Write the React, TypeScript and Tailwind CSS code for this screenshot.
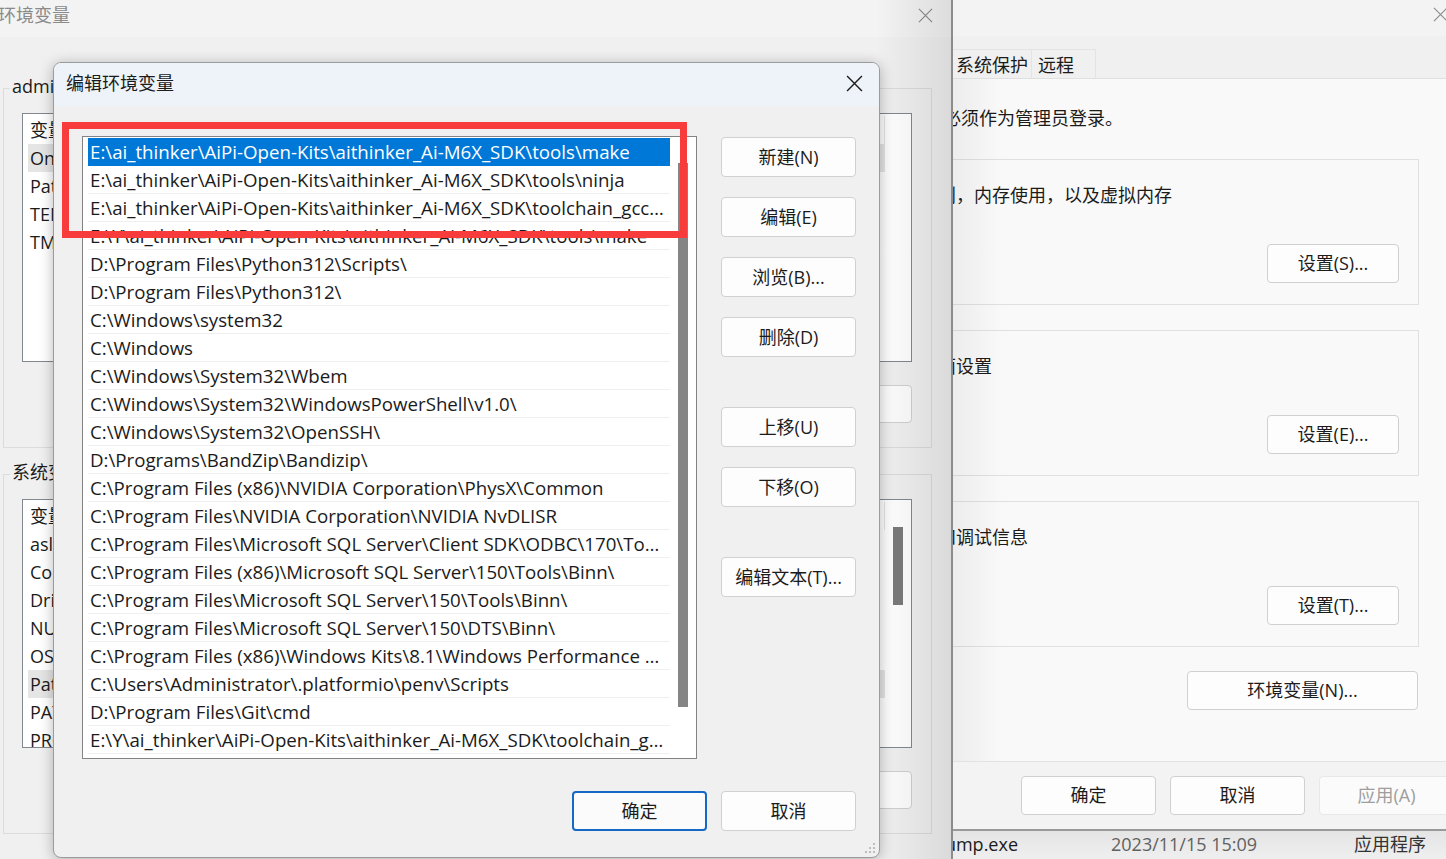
import React from "react";

const PATHS = [
  "E:\\ai_thinker\\AiPi-Open-Kits\\aithinker_Ai-M6X_SDK\\tools\\make",
  "E:\\ai_thinker\\AiPi-Open-Kits\\aithinker_Ai-M6X_SDK\\tools\\ninja",
  "E:\\ai_thinker\\AiPi-Open-Kits\\aithinker_Ai-M6X_SDK\\toolchain_gcc_t-head_windows\\bin",
  "E:\\Y\\ai_thinker\\AiPi-Open-Kits\\aithinker_Ai-M6X_SDK\\tools\\make",
  "D:\\Program Files\\Python312\\Scripts\\",
  "D:\\Program Files\\Python312\\",
  "C:\\Windows\\system32",
  "C:\\Windows",
  "C:\\Windows\\System32\\Wbem",
  "C:\\Windows\\System32\\WindowsPowerShell\\v1.0\\",
  "C:\\Windows\\System32\\OpenSSH\\",
  "D:\\Programs\\BandZip\\Bandizip\\",
  "C:\\Program Files (x86)\\NVIDIA Corporation\\PhysX\\Common",
  "C:\\Program Files\\NVIDIA Corporation\\NVIDIA NvDLISR",
  "C:\\Program Files\\Microsoft SQL Server\\Client SDK\\ODBC\\170\\Tools\\Binn\\",
  "C:\\Program Files (x86)\\Microsoft SQL Server\\150\\Tools\\Binn\\",
  "C:\\Program Files\\Microsoft SQL Server\\150\\Tools\\Binn\\",
  "C:\\Program Files\\Microsoft SQL Server\\150\\DTS\\Binn\\",
  "C:\\Program Files (x86)\\Windows Kits\\8.1\\Windows Performance Toolkit\\",
  "C:\\Users\\Administrator\\.platformio\\penv\\Scripts",
  "D:\\Program Files\\Git\\cmd",
  "E:\\Y\\ai_thinker\\AiPi-Open-Kits\\aithinker_Ai-M6X_SDK\\toolchain_gcc_t-head_windows\\bin",
];

const USER_VARS = ["OneDrive", "Path", "TEMP", "TMP"];
const SYS_VARS = [
  "asl.log",
  "ComSpec",
  "DriverData",
  "NUMBER_OF_PROCESSORS",
  "OS",
  "Path",
  "PATHEXT",
  "PROCESSOR_ARCHITECTURE",
];

function CloseX({ size = 16, color = "#1b1b1b", width = 1.3 }: { size?: number; color?: string; width?: number }) {
  return (
    <svg width={size} height={size} viewBox="0 0 16 16" fill="none">
      <path d="M1 1L15 15M15 1L1 15" stroke={color} strokeWidth={width} />
    </svg>
  );
}

function Btn({
  children,
  className = "",
  primary = false,
  disabled = false,
}: {
  children: React.ReactNode;
  className?: string;
  primary?: boolean;
  disabled?: boolean;
}) {
  const look = primary
    ? "border-2 border-[#1568c4] bg-[#fbfbfb] text-[#1b1b1b]"
    : disabled
    ? "border border-[#e8e8e8] bg-[#fbfbfb] text-[#9e9e9e]"
    : "border border-[#d0d0d0] bg-[#fdfdfd] text-[#1b1b1b]";
  return (
    <div className={`flex shrink-0 items-center justify-center rounded-[4px] text-[18px] ${look} ${className}`}>
      {children}
    </div>
  );
}

function EnvGroup({
  label,
  rows,
  selected,
  scroll,
}: {
  label: string;
  rows: string[];
  selected: number;
  scroll?: boolean;
}) {
  return (
    <div className="h-[360px] w-[929px] border border-[#dcdcdc]">
      <div className="-mt-[15px] ml-[6px] w-fit bg-[#f0f0f0] px-[2px] text-[18px] leading-[24px] text-[#1b1b1b]">
        {label}
      </div>
      <div className="ml-[18px] mr-[19px] mt-[15px] flex h-[249px] border border-[#828790] bg-white">
        <div className="flex-1 pl-[5px] pt-[2px]">
          <div className="flex h-[28px] w-[857px] items-center border-r border-[#e5e5e5] pl-[2px] text-[18px]">
            <span className="w-[300px]">变量</span>
            <span>值</span>
          </div>
          {rows.map((r, i) => (
            <div
              key={r}
              className={`flex h-[28px] w-[857px] items-center pl-[2px] text-[18px] ${i === selected ? "bg-[#e5e5e5]" : ""}`}
            >
              {r}
            </div>
          ))}
        </div>
        {scroll && (
          <div className="w-[18px]">
            <div className="mt-[27px] h-[78px] w-[10px] bg-[#7b7b7b]" />
          </div>
        )}
      </div>
      <div className="mr-[19px] mt-[23px] flex justify-end gap-[14px]">
        <Btn className="h-[38px] w-[135px]">新建(N)...</Btn>
        <Btn className="h-[38px] w-[135px]">编辑(E)...</Btn>
        <Btn className="h-[38px] w-[135px]">删除(D)</Btn>
      </div>
    </div>
  );
}

function SettingsGroup({ text, button, first }: { text: string; button: string; first?: boolean }) {
  return (
    <div className={`flex h-[146px] w-[486px] flex-col border border-[#e0e0e0] ${first ? "mt-[30px]" : "mt-[25px]"} -ml-[20px]`}>
      <div className="ml-[4px] mt-[24px] whitespace-nowrap text-[18px] leading-[22px]">{text}</div>
      <Btn className="mr-[19px] mt-[38px] h-[39px] w-[132px] self-end">{button}</Btn>
    </div>
  );
}

export default function App() {
  return (
    <div className="relative h-[859px] w-[1446px] overflow-hidden bg-[#e9e9e9] font-['Open_Sans','Noto_Sans_CJK_SC',sans-serif] text-[#1b1b1b]">
      {/* explorer row behind the windows */}
      <div className="absolute left-[880px] top-[829px] flex h-[30px] w-[600px] items-center bg-gradient-to-b from-[#e4e4e4] to-[#efefef] text-[18px]">
        <span className="w-[138px] whitespace-nowrap text-right">procdump.exe</span>
        <span className="ml-[93px] w-[243px] text-[#616161]">2023/11/15 15:09</span>
        <span className="text-[#333]">应用程序</span>
      </div>

      {/* system properties window */}
      <div className="absolute left-[953px] top-0 flex h-[831px] w-[520px] flex-col border-b-2 border-[#9a9a9a] bg-[#f0f0f0]">
        <div className="flex h-[36px] shrink-0 items-center justify-end bg-[#f3f3f3] pb-[7px] pr-[25px]">
          <CloseX size={15} color="#8a8a8a" width={1.2} />
        </div>
        <div className="flex h-[43px] shrink-0 items-end border-b border-[#dfdfdf]">
          <div className="-ml-[8px] flex h-[29px] items-center border border-b-0 border-[#e3e3e3] pl-[10px] pr-[3px] pt-[3px] text-[18px]">
            系统保护
          </div>
          <div className="flex h-[29px] w-[64px] items-center border border-b-0 border-l-0 border-[#e3e3e3] pl-[6px] pt-[3px] text-[18px]">
            远程
          </div>
        </div>
        <div className="relative flex flex-1 flex-col overflow-hidden bg-[#f9f9f9] pr-[54px]">
          <div className="-ml-[10px] mt-[28px] whitespace-nowrap text-[18px] leading-[22px]">必须作为管理员登录。</div>
          <SettingsGroup first text="划，内存使用，以及虚拟内存" button="设置(S)..." />
          <SettingsGroup text="面设置" button="设置(E)..." />
          <SettingsGroup text="和调试信息" button="设置(T)..." />
          <Btn className="mr-[1px] mt-[24px] h-[39px] w-[231px] self-end">环境变量(N)...</Btn>
          <div className="pointer-events-none absolute inset-y-0 left-0 w-[50px] bg-gradient-to-r from-[rgba(0,0,0,0.05)] to-transparent" />
        </div>
        <div className="flex h-[68px] shrink-0 gap-[14px] border-t border-[#e2e2e2] bg-[#f3f3f3] pl-[68px] pt-[14px]">
          <Btn className="h-[39px] w-[135px]">确定</Btn>
          <Btn className="h-[39px] w-[135px]">取消</Btn>
          <Btn disabled className="h-[39px] w-[135px]">
            应用(A)
          </Btn>
        </div>
      </div>

      {/* environment variables window */}
      <div className="absolute left-0 top-0 h-[859px] w-[953px] overflow-hidden border-r-2 border-[#8c8c8c] bg-[#f0f0f0]">
        <div className="flex h-[37px] items-center justify-between bg-[#f3f3f3] pb-[7px] pr-[18px]">
          <span className="-ml-[2px] text-[18px] text-[#8a8a8a]">环境变量</span>
          <CloseX size={15} color="#8a8a8a" width={1.2} />
        </div>
        <div className="pl-[3px] pt-[51px]">
          <EnvGroup label="admin 的用户变量(U)" rows={USER_VARS} selected={0} />
          <div className="mt-[26px]">
            <EnvGroup label="系统变量(S)" rows={SYS_VARS} selected={5} scroll />
          </div>
        </div>
        <div className="pointer-events-none absolute inset-y-0 right-0 w-[75px] bg-gradient-to-r from-transparent to-[rgba(0,0,0,0.09)]" />
      </div>

      {/* edit environment variable dialog */}
      <div className="absolute left-[53px] top-[62px] flex h-[796px] w-[827px] flex-col overflow-hidden rounded-[8px] border border-[#9b9b9b] bg-[#f0f0f0] shadow-[0_2px_14px_rgba(0,0,0,0.28)]">
        <div className="flex h-[43px] shrink-0 items-center justify-between bg-[#eef3f9] pb-[2px] pl-[12px] pr-[16px]">
          <span className="text-[18px]">编辑环境变量</span>
          <CloseX size={17} />
        </div>
        <div className="flex pl-[28px] pt-[30px]">
          <div className="flex h-[623px] w-[615px] border border-[#838383] bg-white">
            <div className="w-[587px] pl-[5px] pt-[1px]">
              {PATHS.map((p, i) => (
                <div
                  key={i}
                  className={`h-[28px] w-[582px] overflow-hidden text-ellipsis whitespace-nowrap border-b pl-[2px] pr-[4px] text-[18.7px] leading-[28px] ${
                    i === 0 ? "border-[#0078d7] bg-[#0078d7] text-white" : "border-[#efefef]"
                  }`}
                >
                  {p}
                </div>
              ))}
            </div>
            <div className="flex-1">
              <div className="ml-[8px] mt-[26px] h-[544px] w-[10px] bg-[#858585]" />
            </div>
          </div>
          <div className="ml-[24px] flex flex-col pt-[1px]">
            <Btn className="h-[40px] w-[135px]">新建(N)</Btn>
            <Btn className="mt-[20px] h-[40px] w-[135px]">编辑(E)</Btn>
            <Btn className="mt-[20px] h-[40px] w-[135px]">浏览(B)...</Btn>
            <Btn className="mt-[20px] h-[40px] w-[135px]">删除(D)</Btn>
            <Btn className="mt-[50px] h-[40px] w-[135px]">上移(U)</Btn>
            <Btn className="mt-[20px] h-[40px] w-[135px]">下移(O)</Btn>
            <Btn className="mt-[50px] h-[40px] w-[135px]">编辑文本(T)...</Btn>
          </div>
        </div>
        <div className="mt-[32px] flex justify-end gap-[14px] pr-[23px]">
          <Btn primary className="h-[40px] w-[135px]">
            确定
          </Btn>
          <Btn className="h-[40px] w-[135px]">取消</Btn>
        </div>
        <svg className="absolute bottom-[2px] right-[2px]" width="14" height="14" viewBox="0 0 14 14">
          <rect x="10" y="2" width="2" height="2" fill="#bdbdbd" />
          <rect x="6" y="6" width="2" height="2" fill="#bdbdbd" />
          <rect x="10" y="6" width="2" height="2" fill="#bdbdbd" />
          <rect x="2" y="10" width="2" height="2" fill="#bdbdbd" />
          <rect x="6" y="10" width="2" height="2" fill="#bdbdbd" />
          <rect x="10" y="10" width="2" height="2" fill="#bdbdbd" />
        </svg>
      </div>

      {/* red highlight annotation */}
      <div className="pointer-events-none absolute left-[62px] top-[122px] h-[116px] w-[625px] border-[7px] border-[#f83b3b]" />
    </div>
  );
}
